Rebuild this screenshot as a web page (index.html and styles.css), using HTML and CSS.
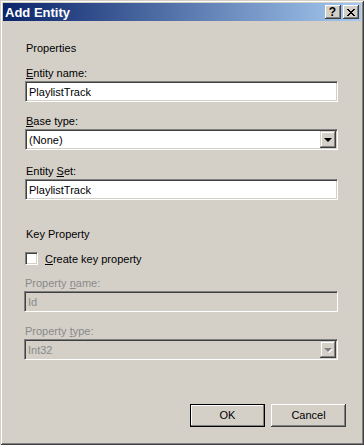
FILE: index.html
```html
<!DOCTYPE html>
<html lang="en">
<head>
    <meta charset="UTF-8">
    <meta name="viewport" content="width=device-width, initial-scale=1.0">
    <title>Add Entity</title>
    <link rel="stylesheet" href="styles.css">
</head>
<body>

    <div class="window">
        <!-- Title bar -->
        <div class="titlebar">
            <span class="title">Add Entity</span>
            <div class="caption-buttons">
                <div class="cap-btn help">?</div>
                <div class="cap-btn">
                    <svg width="8" height="7" viewBox="0 0 8 7">
                        <path d="M0 0h2v1h1v1h2v-1h1v-1h2v1h-1v1h-1v1h-1v1h1v1h1v1h1v1h-2v-1h-1v-1h-2v1h-1v1h-2v-1h1v-1h1v-1h1v-1h-1v-1h-1v-1h-1z" fill="#000"/>
                    </svg>
                </div>
            </div>
        </div>

        <!-- Form -->
        <div class="content">
            <div class="group-title">Properties</div>

            <div class="field-label"><u>E</u>ntity name:</div>
            <div class="textbox">PlaylistTrack</div>

            <div class="field-label"><u>B</u>ase type:</div>
            <div class="combo">
                <span>(None)</span>
                <div class="drop-btn"><span class="arrow"></span></div>
            </div>

            <div class="field-label">Entity <u>S</u>et:</div>
            <div class="textbox last">PlaylistTrack</div>

            <div class="group-title">Key Property</div>

            <div class="check-row">
                <div class="checkbox"></div>
                <span><u>C</u>reate key property</span>
            </div>

            <div class="key-fields">
                <div class="field-label disabled">Property <u>n</u>ame:</div>
                <div class="textbox disabled">Id</div>

                <div class="field-label disabled">Property <u>t</u>ype:</div>
                <div class="combo disabled">
                    <span>Int32</span>
                    <div class="drop-btn"><span class="arrow"></span></div>
                </div>
            </div>
        </div>

        <!-- Buttons -->
        <div class="footer">
            <div class="btn default">OK</div>
            <div class="btn">Cancel</div>
        </div>
    </div>

</body>
</html>
```

FILE: styles.css
```css
* {
    margin: 0;
    padding: 0;
    box-sizing: border-box;
    font-family: "Liberation Sans", Arial, sans-serif;
}
body {
    background: #d4d0c8;
    font-size: 11px;
    color: #000;
}
u { text-decoration: underline; text-underline-offset: 1px; }

.window {
    width: 364px;
    height: 445px;
    padding: 3px;
    display: flex;
    flex-direction: column;
    background: #d4d0c8;
    box-shadow: inset 1px 1px #d4d0c8, inset -1px -1px #404040,
                inset 2px 2px #fff, inset -2px -2px #808080;
}

/* title bar */
.titlebar {
    height: 18px;
    display: flex;
    align-items: center;
    justify-content: space-between;
    padding: 0 2px;
    background: linear-gradient(to right, #0a246a, #a6caf0);
}
.title {
    color: #fff;
    font-weight: bold;
    font-size: 13px;
}
.caption-buttons {
    display: flex;
    gap: 2px;
}
.cap-btn {
    width: 16px;
    height: 14px;
    display: flex;
    align-items: center;
    justify-content: center;
    background: #d4d0c8;
    box-shadow: inset -1px -1px #404040, inset 1px 1px #fff,
                inset -2px -2px #808080, inset 2px 2px #d4d0c8;
}
.cap-btn.help {
    font-weight: bold;
    font-size: 12px;
    line-height: 14px;
    padding-right: 1px;
}

/* form */
.content {
    padding: 21px 23px 0 22px;
}
.group-title {
    line-height: 13px;
    margin-bottom: 12px;
    padding-left: 1px;
}
.field-label {
    line-height: 13px;
    margin-bottom: 1px;
    padding-left: 1px;
}
.textbox, .combo {
    position: relative;
    height: 21px;
    line-height: 17px;
    padding: 2px 3px;
    margin-bottom: 13px;
    background: #fff;
    border: 1px solid;
    border-color: #808080 #fff #fff #808080;
    box-shadow: inset 1px 1px #404040, inset -1px -1px #d4d0c8;
}
.combo { margin-bottom: 15px; }
.textbox.last { margin-bottom: 28px; }
.drop-btn {
    position: absolute;
    top: 1px;
    right: 1px;
    width: 16px;
    height: 17px;
    display: flex;
    align-items: center;
    justify-content: center;
    background: #d4d0c8;
    box-shadow: inset -1px -1px #404040, inset 1px 1px #d4d0c8,
                inset -2px -2px #808080, inset 2px 2px #fff;
}
.arrow {
    width: 0;
    height: 0;
    border-left: 4px solid transparent;
    border-right: 4px solid transparent;
    border-top: 4px solid #000;
    margin-top: 1px;
}

.check-row {
    display: flex;
    align-items: center;
    gap: 7px;
    height: 13px;
    margin-top: -1px;
    margin-bottom: 12px;
}
.checkbox {
    width: 13px;
    height: 13px;
    background: #fff;
    border: 1px solid;
    border-color: #808080 #fff #fff #808080;
    box-shadow: inset 1px 1px #404040, inset -1px -1px #d4d0c8;
}

.key-fields { margin-left: -1px; }
.disabled { color: #8a8a8a; }
.textbox.disabled, .combo.disabled { background: #d4d0c8; }
.combo.disabled .arrow {
    border-top-color: #808080;
    filter: drop-shadow(1px 1px 0 #fff);
}

/* buttons */
.footer {
    margin-top: auto;
    display: flex;
    justify-content: flex-end;
    gap: 6px;
    padding: 0 15px 15px 0;
}
.btn {
    width: 75px;
    height: 23px;
    line-height: 23px;
    text-align: center;
    background: #d4d0c8;
    box-shadow: inset -1px -1px #404040, inset 1px 1px #fff,
                inset -2px -2px #808080, inset 2px 2px #d4d0c8;
}
.btn.default {
    box-shadow: inset 0 0 0 1px #000, inset -2px -2px #808080,
                inset 2px 2px #fff;
}
```
